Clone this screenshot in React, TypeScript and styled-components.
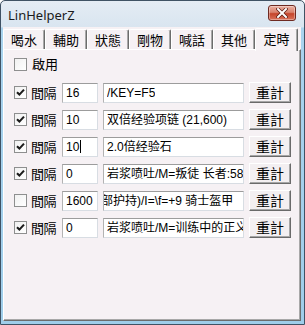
import React from "react";
import styled, { createGlobalStyle } from "styled-components";

const GlobalStyle = createGlobalStyle`
	html, body {
		margin: 0;
		padding: 0;
		background: #ffffff;
	}
	body {
		font-family: "Noto Sans CJK TC", "Liberation Sans", sans-serif;
	}
`;

interface TimerRow {
	checked: boolean,
	interval: string,
	command: string,
	indent?: number,
	caret?: boolean,
}

const tabs = ["喝水", "輔助", "狀態", "剛物", "喊話", "其他", "定時"];

const rows: TimerRow[] = [
	{ checked: true, interval: "16", command: "/KEY=F5" },
	{ checked: true, interval: "10", command: "双倍经验项链 (21,600)" },
	{ checked: true, interval: "10", command: "2.0倍经验石", caret: true },
	{ checked: true, interval: "0", command: "岩浆喷吐/M=叛徒 长者:58" },
	{ checked: false, interval: "1600", command: "部护持)/I=\\f=+9 骑士盔甲", indent: -6 },
	{ checked: true, interval: "0", command: "岩浆喷吐/M=训练中的正义" },
];

const CheckBox: React.FC<{ checked: boolean }> = ({ checked }) => (
	<CheckBoxStyle>
		{checked && (
			<svg width="9" height="9" viewBox="0 0 9 9">
				<path d="M1 4.2 L3.4 6.6 L8 1.6" fill="none" stroke="#1c1c1c" strokeWidth="2.1" />
			</svg>
		)}
	</CheckBoxStyle>
);

const App: React.FC = () => {
	return (
		<>
			<GlobalStyle />
			<Window>
				<TitleBar>
					<Title>LinHelperZ</Title>
					<CloseButton>
						<svg width="12" height="10" viewBox="0 0 12 10">
							<path d="M2 1 L10 9 M10 1 L2 9" stroke="#5a1a12" strokeWidth="3.4" strokeLinecap="square" />
							<path d="M2 1 L10 9 M10 1 L2 9" stroke="#ffffff" strokeWidth="2" strokeLinecap="square" />
						</svg>
					</CloseButton>
				</TitleBar>
				<Client>
					<TabStrip>
						{tabs.map((t, i) => (
							<Tab key={t} $active={i === tabs.length - 1}>{t}</Tab>
						))}
					</TabStrip>
					<Panel>
						<EnableRow>
							<CheckBox checked={false} />
							<span>啟用</span>
						</EnableRow>
						<RowList>
							{rows.map((r, i) => (
								<Row key={i}>
									<CheckBox checked={r.checked} />
									<Label>間隔</Label>
									<NumberBox>
										{r.interval}
										{r.caret && <Caret />}
									</NumberBox>
									<CommandBox>
										<CommandText style={r.indent ? { marginLeft: r.indent } : undefined}>{r.command}</CommandText>
									</CommandBox>
									<ResetButton>重計</ResetButton>
								</Row>
							))}
						</RowList>
					</Panel>
				</Client>
			</Window>
		</>
	);
};

const Window = styled.div`
	width: 305px;
	height: 325px;
	box-sizing: border-box;
	border: 1px solid #3f5264;
	border-radius: 5px 5px 0 0;
	background: linear-gradient(180deg, #e4ecf4 0px, #d9e5f0 26px, #a9d3ee 27px, #9fcdea 100%);
	padding: 0 3px 3px 2px;
	display: flex;
	flex-direction: column;
	overflow: hidden;
`;

const TitleBar = styled.div`
	height: 26px;
	display: flex;
	align-items: flex-start;
	justify-content: space-between;
	padding: 0 5px 0 5px;
`;

const Title = styled.div`
	font-family: "Noto Sans", "Liberation Sans", sans-serif;
	font-size: 13px;
	color: #1b1b1b;
	line-height: 13px;
	padding-top: 8px;
`;

const CloseButton = styled.div`
	width: 28px;
	height: 16px;
	margin-top: 4px;
	box-sizing: border-box;
	border: 1px solid #6e2a22;
	border-radius: 3px;
	background: linear-gradient(180deg, #eab0a2 0%, #d9836f 45%, #c5452b 55%, #d9735c 100%);
	display: flex;
	align-items: center;
	justify-content: center;
	box-shadow: inset 0 0 0 1px rgba(255, 255, 255, 0.35);
`;

const Client = styled.div`
	flex: 1;
	background: #f6f1f4;
	display: flex;
	flex-direction: column;
	padding-top: 1px;
`;

const TabStrip = styled.div`
	display: flex;
	align-items: flex-end;
	height: 21px;
	position: relative;
	z-index: 1;
`;

const Tab = styled.div<{ $active: boolean }>`
	box-sizing: border-box;
	height: ${p => (p.$active ? "23px" : "20px")};
	margin-bottom: ${p => (p.$active ? "-2px" : "0")};
	width: ${p => (p.$active ? "43px" : "42px")};
	padding-top: 2px;
	text-align: center;
	font-size: 13px;
	font-weight: 400;
	line-height: 16px;
	color: #000;
	background: #f6f1f4;
	border-top: 1px solid #ffffff;
	border-left: 1px solid #ffffff;
	border-right: 1px solid #6c6c6c;
	border-radius: 2px 2px 0 0;
	box-shadow: inset -1px 0 0 #a8a8a8;
`;

const Panel = styled.div`
	flex: 1;
	box-sizing: border-box;
	background: #f6f1f4;
	border-top: 1px solid #ffffff;
	border-left: 1px solid #ffffff;
	border-right: 1px solid #6c6c6c;
	border-bottom: 1px solid #6c6c6c;
	box-shadow: inset -1px -1px 0 #a8a8a8;
	padding: 7px 0 0 10px;
	font-size: 13px;
`;

const EnableRow = styled.div`
	display: flex;
	align-items: center;
	gap: 5px;
	height: 14px;
	line-height: 14px;
`;

const RowList = styled.div`
	display: flex;
	flex-direction: column;
	gap: 6px;
	margin-top: 11px;
`;

const Row = styled.div`
	display: flex;
	align-items: center;
	height: 21px;
`;

const CheckBoxStyle = styled.div`
	width: 13px;
	height: 13px;
	box-sizing: border-box;
	border: 1px solid #8e8f8f;
	background: linear-gradient(135deg, #f1f1f1 0%, #ffffff 100%);
	display: flex;
	align-items: center;
	justify-content: center;
	flex-shrink: 0;
`;

const Label = styled.span`
	margin-left: 4px;
	width: 25px;
	font-size: 13px;
	line-height: 16px;
	color: #000;
	letter-spacing: -0.5px;
`;

const Field = styled.div`
	box-sizing: border-box;
	height: 20px;
	background: #ffffff;
	border: 1px solid #d8dde3;
	border-top-color: #9c9c9c;
	border-left-color: #b3b3b3;
	font-family: "Liberation Sans", "Noto Sans CJK SC", sans-serif;
	font-size: 12px;
	line-height: 18px;
	padding-left: 3px;
	white-space: nowrap;
	overflow: hidden;
	color: #000;
	display: flex;
	align-items: center;
	flex-shrink: 0;
`;

const NumberBox = styled(Field)`
	width: 36px;
	margin-left: 6px;
`;

const Caret = styled.span`
	width: 1px;
	height: 13px;
	background: #000;
	margin-left: 1px;
`;

const CommandBox = styled(Field)`
	width: 141px;
	margin-left: 5px;
`;

const CommandText = styled.span`
	display: block;
	white-space: nowrap;
	overflow: hidden;
	max-width: 100%;
`;

const ResetButton = styled.div`
	box-sizing: border-box;
	width: 42px;
	height: 21px;
	margin-left: 5px;
	background: #f3eff1;
	border-top: 1px solid #ffffff;
	border-left: 1px solid #ffffff;
	border-right: 1px solid #6a6a6a;
	border-bottom: 1px solid #6a6a6a;
	box-shadow: inset -1px -1px 0 #a6a6a6;
	font-size: 14px;
	line-height: 18px;
	text-align: center;
	color: #000;
`;

export default App;
